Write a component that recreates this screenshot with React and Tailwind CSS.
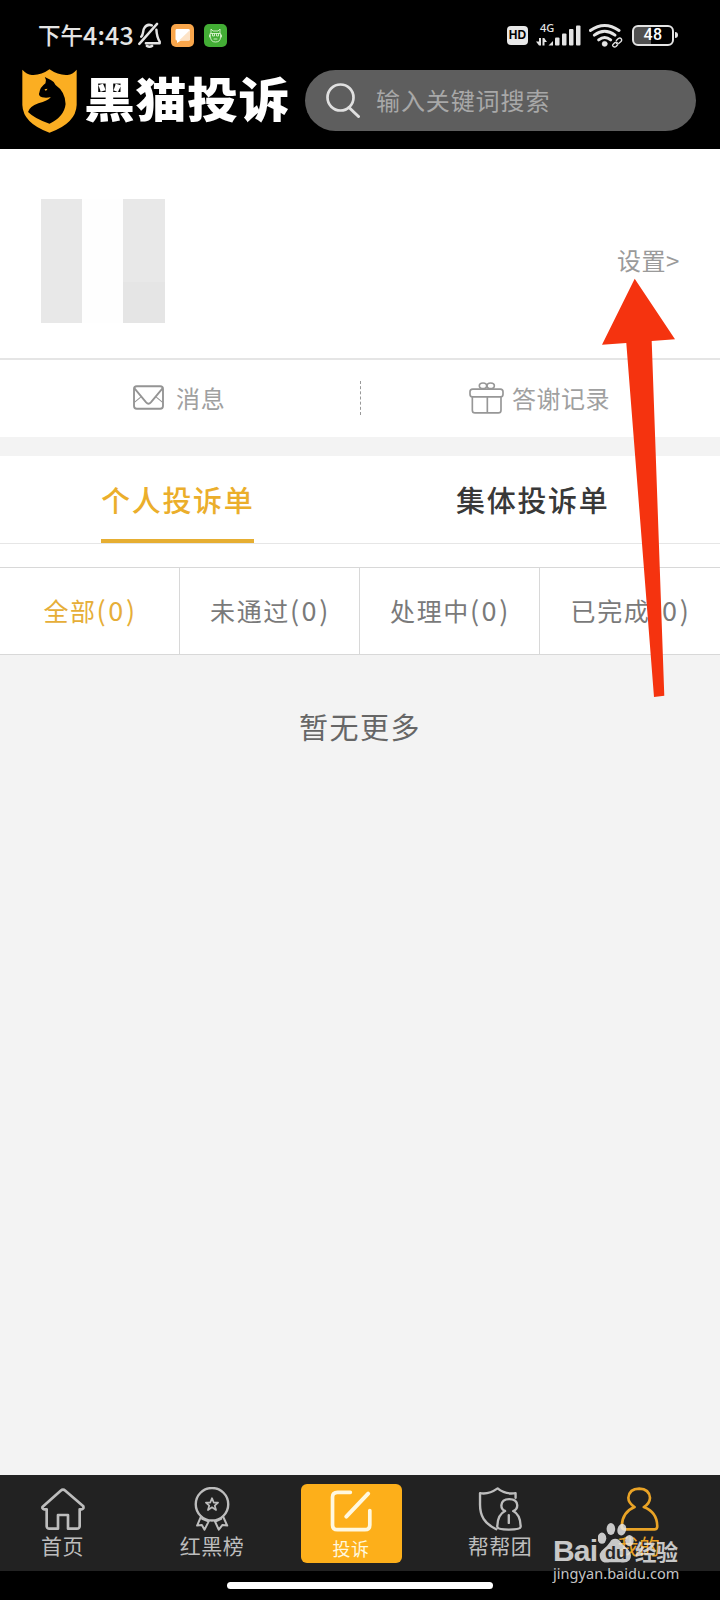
import React from 'react';

const stroke = { fill: 'none', strokeLinecap: 'round', strokeLinejoin: 'round' };

function StatusBar() {
  return (
    <div className="flex h-[70px] items-center pl-[38px] pr-[42px] text-[#e4e4e4]">
      <div className="flex items-center whitespace-nowrap">
        <span className="w-[45px] pb-[2px] text-[22.5px] leading-8 font-medium">下午</span>
        <span className="w-[55px] pb-[2px] text-[25px] leading-8 font-medium tracking-[0.2px]">4:43</span>
      </div>
      <svg viewBox="414 66 70 78" className="h-[26px] w-[23px]" stroke="#e4e4e4" strokeWidth="7.500" {...stroke}>
        <path d="M472 71 L418 132" />
        <path d="M424 110 C431 104 428 92 433 84 Q441 70 456 76" />
        <path d="M470 89 C471 106 473 114 480 125 V130 H438" />
        <path d="M441 138 Q449 143 457 138" />
      </svg>
      <svg viewBox="0 0 23 23" className="ml-[10px] size-[23px]">
        <rect width="23" height="23" rx="5" fill="#f9a64b" />
        <path d="M5.5 5 H17.5 Q19 5 19 6.5 V15 Q19 16.5 17.5 16.5 H10 L6 19 V16.5 Q4.5 16.5 4.5 15 V6.5 Q4.500 5 5.500 5Z" fill="#fff" />
        <path d="M19 6 L8 16.500 H17.500 Q19 16.500 19 15Z" fill="#fde3c6" />
      </svg>
      <svg viewBox="0 0 23 23" className="ml-[10px] size-[23px]">
        <rect width="23" height="23" rx="5" fill="#43ad35" />
        <g stroke="#d9f3cf" strokeWidth="0.900" {...stroke}>
          <path d="M7 9 V5 L9 7 H14 L16 5 V9" />
          <path d="M6.500 9.500 H16.500 V13 Q16.500 18 11.500 18 Q6.500 18 6.500 13Z" />
          <path d="M5.500 11 V13 M17.500 11 V13 M8.500 9.500 V12 H10.500 V9.500 M12.500 9.500 V12 H14.500 V9.500 M10 15 H13" />
        </g>
      </svg>
      <div className="ml-auto flex items-center">
        <div className="flex h-[19px] w-[21px] items-center justify-center rounded-[4px] bg-[#e8e8e8] font-['Liberation_Sans',sans-serif] text-[12px] font-bold text-black">HD</div>
        <div className="relative ml-[8px] h-[24px] w-[45px]">
          <span className="absolute -top-[2px] left-[4px] font-['Noto_Sans',sans-serif] text-[11px] leading-[13px] font-medium">4G</span>
          <svg viewBox="0 0 45 24" className="size-full" fill="#e4e4e4">
            <path d="M3 15 V22.500 H5 V15Z M0 18.500 H3 V22.500Z M6.500 15 V22.500 H8.500 V15Z M8.500 15.500 L11 19 H8.500Z" />
            <path d="M12.500 22.500 L17 18 V22.500Z" />
            <rect x="19" y="14.500" width="4.500" height="8" rx="1" />
            <rect x="26" y="10.500" width="4.500" height="12" rx="1" />
            <rect x="33" y="6" width="4.500" height="16.500" rx="1" />
            <rect x="40" y="2.500" width="4.500" height="20" rx="1" />
          </svg>
        </div>
        <svg viewBox="897 68 102 74" className="ml-[8px] h-[25px] w-[34px]" stroke="#e4e4e4" {...stroke}>
          <g strokeWidth="9">
            <path d="M901 90 Q944 60 987 90" />
            <path d="M913 104 Q944 81 975 104" />
            <path d="M926 118 Q944 104 962 118" />
          </g>
          <circle cx="944" cy="130" r="8" fill="#e4e4e4" />
          <g strokeWidth="4">
            <path d="M979 120 l6 -6 q5 -3 8 0 q4 4 0 9 l-7 6 q-4 2 -7 0" />
            <path d="M982 127 q-3 -4 -8 0 l-5 5 q-3 3 1 6 q4 3 8 0 l5 -5" />
          </g>
        </svg>
        <div className="ml-[9px] flex h-[21px] w-[42px] items-center justify-center rounded-[6px] border-2 border-[#e4e4e4] bg-gradient-to-r from-[#505050] from-45% to-black to-45% font-['Roboto',sans-serif] text-[16px] font-medium tracking-[0.3px] text-white">48</div>
        <div className="ml-px h-[6px] w-[3px] rounded-r-sm bg-[#e4e4e4]" />
      </div>
    </div>
  );
}

function CatShield() {
  return (
    <svg viewBox="66 207 164 192" className="h-[64px] w-[55px] shrink-0" preserveAspectRatio="none">
      <path fill="#fbae22" d="M67 209 Q80 223 95 225 Q122 227 148 208 Q175 227 202 225 Q217 223 229 209 V315 Q227 370 148 398 Q69 370 67 315Z" />
      <path d="M134 231 L152 240 Q162 244 166 255 Q195 275 196 312 Q192 350 148 371 Q105 357 84 336 Q88 320 115 310 Q143 303 152 291 Q140 295 126 292 Q113 288 118 277 Q120 262 136 250 Q140 240 134 231Z" />
      <path d="M133 268 L142 266 Q140 272 136 272Z" fill="#fbae22" />
    </svg>
  );
}

function Header() {
  return (
    <header className="h-[149px] shrink-0 bg-black">
      <StatusBar />
      <div className="flex h-[61px] items-center pl-[22px]">
        <CatShield />
        <h1 className="ml-[7px] w-[221px] origin-center scale-y-[0.92] pb-[10px] text-[51px] leading-[60px] font-black tracking-[0.500px] whitespace-nowrap text-white">黑猫投诉</h1>
        <div className="flex h-[61px] w-[391px] items-center rounded-full bg-[#5e5e5e] pl-[21px]">
          <svg viewBox="0 0 34 35" className="h-[35px] w-[34px]" stroke="#e0e0e0" strokeWidth="2.700" {...stroke}>
            <circle cx="14.500" cy="14.500" r="13" />
            <path d="M23 24.500 L32.500 33.500" strokeWidth="3" />
          </svg>
          <span className="ml-[16px] pb-[2px] text-[24px] leading-8 tracking-[0.9px] text-[#a8a8a8]">输入关键词搜索</span>
        </div>
      </div>
    </header>
  );
}

function Profile() {
  return (
    <section className="flex h-[211px] shrink-0 justify-between border-b-2 border-[#e5e5e5] bg-white pl-[41px] pr-[40px]">
      <div className="mt-[50px] grid h-[124px] w-[124px] grid-cols-[41px_41px_42px]">
        <div className="bg-[#e8e8e8]" />
        <div className="bg-[#fefefe]" />
        <div className="flex flex-col justify-end bg-[#e8e8e8]"><div className="h-[41px] bg-[#e5e5e5]" /></div>
      </div>
      <span className="mt-[95px] h-8 text-[24px] leading-8 tracking-[0.6px] whitespace-nowrap text-[#9a9a9a]">设置&gt;</span>
    </section>
  );
}

function Shortcuts() {
  return (
    <section className="flex h-[77px] shrink-0 items-center bg-white text-[24px] leading-8 tracking-[0.8px] text-[#a0a0a0]">
      <div className="flex h-full w-[361px] items-center pl-[133px]">
        <svg viewBox="401 705 92 73" className="mb-[2px] h-[25px] w-[31px]" stroke="#949494" strokeWidth="5.500" {...stroke}>
          <rect x="404" y="708" width="86" height="67" rx="8" />
          <path d="M406 715 L440 756 Q447 764 454 756 L488 715" />
          <path d="M406 755 L423 741 M488 755 L471 741" strokeWidth="3" />
        </svg>
        <span className="ml-[12px] pb-px">消息</span>
      </div>
      <div className="-ml-px mb-px h-[34px] border-l border-dashed border-[#999]" />
      <div className="flex h-full items-center pl-[108px]">
        <svg viewBox="327 455 105 95" className="mb-[2px] h-[32px] w-[35px]" stroke="#979797" strokeWidth="5" {...stroke}>
          <rect x="330" y="476" width="99" height="23" rx="8" />
          <path d="M337 499 V539 Q337 547 345 547 H415 Q423 547 423 539 V499 M382 499 V547" />
          <ellipse cx="369" cy="466" rx="11" ry="8.500" />
          <ellipse cx="392" cy="466" rx="11" ry="8.500" />
        </svg>
        <span className="ml-[8px] pb-px tracking-[0.500px]">答谢记录</span>
      </div>
    </section>
  );
}

function Tabs() {
  return (
    <div className="flex h-[88px] shrink-0 justify-between border-b border-[#e6e6e6] bg-white pl-[101px] pr-[111px] text-[29px] font-medium tracking-[1.700px]">
      <div className="h-[87px] w-[153px] border-b-4 border-[#e6ae32] pt-[21px] text-center leading-[44px] whitespace-nowrap text-[#ebae2b]">个人投诉单</div>
      <div className="h-[87px] w-[153px] pt-[21px] text-center leading-[44px] whitespace-nowrap text-[#383838]">集体投诉单</div>
    </div>
  );
}

function Filters() {
  const filters = [
    { name: '全部', tone: 'border-r text-[#e6ae38]' },
    { name: '未通过', tone: 'border-r' },
    { name: '处理中', tone: 'border-r' },
    { name: '已完成', tone: '' },
  ];
  return (
    <div className="shrink-0 bg-white pt-[23px]">
      <div className="grid h-[88px] grid-cols-4 border-y border-[#d8d8d8] text-[25px] text-[#7a7a7a]">
        {filters.map(({ name, tone }) => (
          <div key={name} className={'flex justify-center border-[#d8d8d8] pl-[2px] leading-[84px] whitespace-nowrap ' + tone}>
            <span className="tracking-[1.600px]">{name}</span>
            <span className="text-[27px] tracking-[2.600px]">(0)</span>
          </div>
        ))}
      </div>
    </div>
  );
}

function BottomNav() {
  const item = 'flex flex-col items-center pt-[12px]';
  const label = 'text-[21px] leading-7 tracking-[0.5px] whitespace-nowrap';
  return (
    <nav className="mt-auto h-[125px] shrink-0 bg-black">
      <div className="grid h-[96px] grid-cols-[125px_174px_104px_194px_84px] bg-[#222] text-[#bdbdbd]">
        <div className={item}>
          <svg viewBox="122 80 132 130" className="h-[44px] w-[44px]" stroke="#bdbdbd" strokeWidth="8" {...stroke}>
            <path d="M181 90 Q188 84 195 90 L249 137 Q251 145 244 146 H238 V197 Q237 204 230 204 H203 V163 H173 V204 H147 Q140 204 139 197 V146 H132 Q124 144 127 138Z" />
          </svg>
          <span className={label}>首页</span>
        </div>
        <div className={item}>
          <svg viewBox="582 80 106 130" className="h-[44px] w-[36px]" stroke="#bdbdbd" strokeWidth="7" {...stroke}>
            <circle cx="635" cy="131" r="48" />
            <path d="M635 113 L640 126 L653 126 L643 135 L647 148 L635 140 L623 148 L627 135 L617 126 L630 126Z" strokeWidth="5" />
            <path strokeWidth="6" d="M602 168 L591 194 L605 192 L613 206 L626 180 M668 168 L680 194 L666 192 L655 206 L643 180 M622 181 L606 174 M648 181 L662 174" />
          </svg>
          <span className={label}>红黑榜</span>
        </div>
        <div className="mx-[1.500px] mt-[9px] flex h-[79px] flex-col items-center rounded-[6px] bg-[#fdaf1a] text-[#fff8df]">
          <svg viewBox="210 92 124 125" className="mt-[6px] h-[42px] w-[42px]" stroke="#fff8df" strokeWidth="11" {...stroke}>
            <path d="M270 99 H232 Q217 99 217 113 V196 Q217 210 232 210 H313 Q328 210 328 196 V153" />
            <path d="M323 103 L258 171" strokeWidth="12" />
          </svg>
          <span className="mt-[4px] text-[18px] leading-6 tracking-[0.5px]">投诉</span>
        </div>
        <div className={item}>
          <svg viewBox="114 80 130 130" className="h-[44px] w-[44px]" stroke="#bdbdbd" strokeWidth="7" {...stroke}>
            <path d="M168 205 C133 188 119 165 120 128 V98 Q145 103 172 84 Q195 103 225 98 V112" />
            <path d="M194 151 Q183 147 183 134 Q185 116 206 116 Q229 116 230 134 Q230 147 218 151 Q240 162 240 198 Q239 206 205 206 Q172 206 171 198 Q171 162 194 151 M205 163 V186" />
          </svg>
          <span className={label}>帮帮团</span>
        </div>
        <div className={item}>
          <svg viewBox="537 80 118 134" className="h-[44px] w-[39px]" stroke="#e9a326" strokeWidth="8" {...stroke}>
            <path d="M581 141 Q562 129 562 113 Q565 85 595 85 Q626 86 628 113 Q627 131 609 141 Q651 157 650 202 Q648 209 642 209 H550 Q543 208 542 202 Q542 157 581 141" />
          </svg>
          <span className={label + ' text-[#e9a326]'}>我的</span>
        </div>
      </div>
      <div className="mx-auto mt-[11px] h-[7px] w-[266px] rounded-full bg-white" />
    </nav>
  );
}

function Watermark() {
  return (
    <div className="absolute top-[1522px] left-[553px] w-[140px] text-[#e6e6e6] opacity-85">
      <div className="flex h-[43px] items-end whitespace-nowrap">
        <span className="w-[45px] font-['Liberation_Sans',sans-serif] text-[30px] leading-[29px] font-bold tracking-[-0.8px]">Bai</span>
        <div className="relative h-[43px] w-[37px]">
          <svg viewBox="472 186 112 130" className="size-full" fill="#e6e6e6">
            <ellipse cx="484" cy="235" rx="13" ry="17" />
            <ellipse cx="511" cy="207" rx="13" ry="18" />
            <ellipse cx="544" cy="209" rx="13" ry="18" transform="rotate(15 544 209)" />
            <ellipse cx="567" cy="242" rx="13" ry="17" />
            <path d="M524 237 Q536 237 543 250 L563 269 Q578 285 567 302 Q559 311 540 308 H507 Q485 312 479 297 Q472 281 489 268 Q500 259 508 247 Q514 237 524 237Z" />
          </svg>
          <span className="absolute bottom-[2px] left-[7px] font-['Liberation_Sans',sans-serif] text-[18px] leading-5 font-bold text-[#282828]">du</span>
        </div>
        <span className="mb-px text-[21.5px] leading-[27px] font-bold">经验</span>
      </div>
      <div className="font-['Noto_Sans',sans-serif] text-[14.5px] leading-[17px] tracking-[0.05px] whitespace-nowrap">jingyan.baidu.com</div>
    </div>
  );
}

export default function App() {
  return (
    <div className="relative flex h-[1600px] w-[720px] flex-col overflow-hidden bg-[#f3f3f3] font-['Noto_Sans_CJK_SC',sans-serif]">
      <Header />
      <Profile />
      <Shortcuts />
      <div className="h-[19px] shrink-0" />
      <Tabs />
      <Filters />
      <p className="mt-[50px] text-center text-[29px] leading-[42px] tracking-[1.500px] text-[#666]">暂无更多</p>
      <BottomNav />
      <svg viewBox="0 0 73 419" className="absolute top-[278px] left-[602px] h-[419px] w-[73px]" fill="#f5330f">
        <path d="M32.700 0.700 L73 61.300 L49.700 63 L62.300 417.700 L52 419 L24.300 65 L0 66.700Z" />
      </svg>
      <Watermark />
    </div>
  );
}
